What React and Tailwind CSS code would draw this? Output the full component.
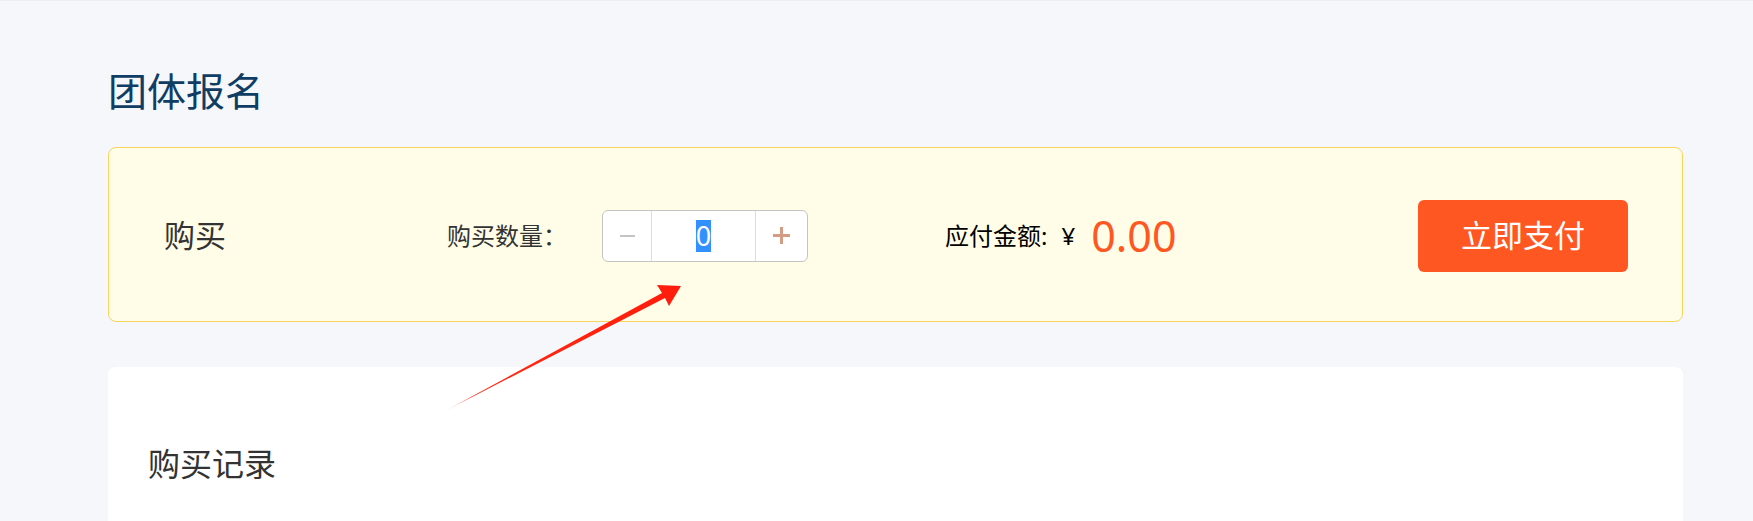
function Stepper() {
  return (
    <div className="flex h-[52px] w-[206px] rounded-[6px] border border-[#c4c4c4] bg-white">
      <div className="flex w-[49px] items-center justify-center border-r border-[#dcdcdc]">
        <div className="h-[2px] w-[15px] bg-[#c4c4c4]" />
      </div>
      <div className="flex w-[104px] items-center justify-center border-r border-[#dcdcdc]">
        <span className="bg-[#3390ff] text-[27px] leading-[32px] text-white">0</span>
      </div>
      <div className="flex flex-1 items-center justify-center">
        <svg width="17" height="17" viewBox="0 0 17 17">
          <rect x="0" y="7" width="17" height="3" fill="#d49c84" />
          <rect x="7" y="0" width="3" height="17" fill="#d49c84" />
        </svg>
      </div>
    </div>
  );
}

function Arrow() {
  return (
    <svg className="pointer-events-none absolute left-0 top-0" width="1753" height="521" viewBox="0 0 1753 521">
      <defs>
        <linearGradient id="arrowFade" x1="445" y1="410" x2="681" y2="285" gradientUnits="userSpaceOnUse">
          <stop offset="0" stopColor="#ff2a14" stopOpacity="0.1" />
          <stop offset="0.12" stopColor="#ff2a14" stopOpacity="1" />
          <stop offset="1" stopColor="#ff1c0c" stopOpacity="1" />
        </linearGradient>
      </defs>
      <polygon
        points="445,410 662,292 657,284 681,285 669,305 665,297"
        fill="url(#arrowFade)"
      />
    </svg>
  );
}

export default function App() {
  return (
    <div className="relative h-screen overflow-hidden border-t border-[#eceef1] bg-[#f5f7fa] pl-[108px] pr-[70px] font-['Noto_Sans','Noto_Sans_CJK_SC',sans-serif]">
      <h1 className="mt-[68px] text-[39px] leading-[44px] text-[#103d63]">团体报名</h1>

      <div className="mt-[34px] flex h-[175px] items-center rounded-lg border border-[#f9d45c] bg-[#fffde7] pl-[55px] pr-[54px] pt-[2px] text-[#333]">
        <div className="w-[283px] text-[31px]">购买</div>
        <div className="text-[24px]">购买数量：</div>
        <div className="ml-[35px]">
          <Stepper />
        </div>
        <div className="ml-[137px] flex items-center text-[24px] text-black">
          <span>应付金额:</span>
          <span className="ml-[14px]">¥</span>
          <span className="ml-[16px] text-[43px] leading-none text-[#ff5722]">0.00</span>
        </div>
        <button className="ml-auto h-[72px] w-[210px] rounded-[6px] bg-[#ff5722] text-[31px] text-white">
          立即支付
        </button>
      </div>

      <div className="mt-[45px] h-[300px] rounded-lg bg-white pl-[40px] pt-[77px]">
        <h2 className="text-[32px] leading-[40px] text-[#333]">购买记录</h2>
      </div>

      <Arrow />
    </div>
  );
}
